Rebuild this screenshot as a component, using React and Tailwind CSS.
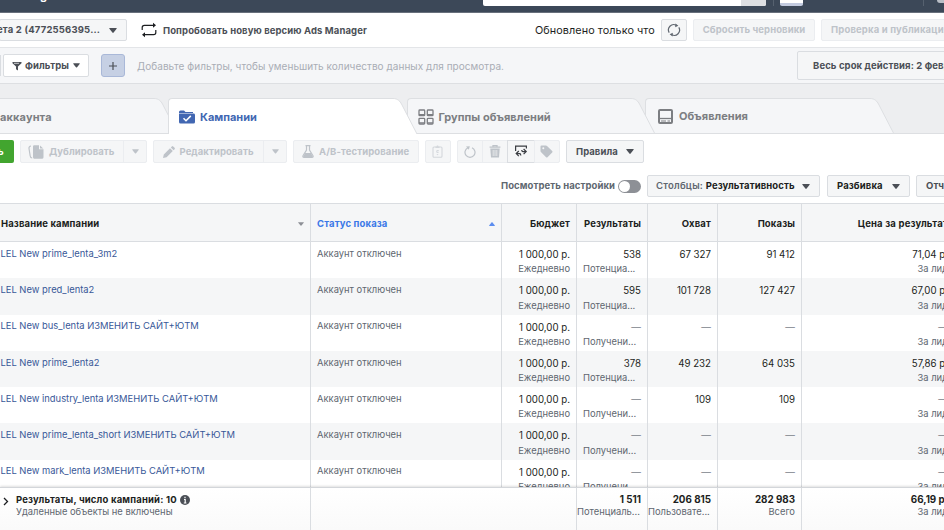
import React from "react";
import clsx from "clsx";

const Caret = ({ className = "text-[#4b4f56]" }) => (
  <svg viewBox="0 0 8 5" className={clsx("w-2 h-[5px] shrink-0", className)}>
    <path d="M.8 0h6.4q.9 0 .4.8L4.6 4.6q-.6.6-1.2 0L.4.8Q-.1 0 .8 0z" fill="currentColor" />
  </svg>
);

const box = "flex items-center shrink-0 border rounded-[2px] bg-[#f5f6f7] whitespace-nowrap";
const active = "border-[#dadde1] text-[#4b4f56]";
const disabled = "border-[#ebedf0] text-[#bec3c9]";

function TopBar() {
  return (
    <div className="h-[13px] bg-[#3c4858] border-b border-[#68707c] flex items-start overflow-hidden shrink-0 *:shrink-0">
      <div className="w-[483px] h-3 relative">
        <span className="absolute left-[-18px] top-[-13px] text-[12px] leading-[15px] font-semibold text-white whitespace-nowrap">
          Ads Manager
        </span>
      </div>
      <div className="w-[283px] h-1.5 rounded-b-[2px] bg-white flex justify-end overflow-hidden">
        <div className="w-[25px] bg-[#dddfe2]" />
      </div>
      <div className="ml-[7px] w-px h-1.5 bg-[#56616f]" />
      <div className="ml-1.5 w-[23px] h-1.5 rounded-b-[2px] bg-white border-b-[3px] border-[#c3cbe0]" />
      <div className="ml-[120px] w-px h-1.5 bg-[#56616f]" />
      <div className="ml-[13px] w-3 h-[3px] rounded-b-full bg-[#b9bec6]" />
    </div>
  );
}

function AccountBar() {
  return (
    <div className="h-[35px] bg-white border-b border-[#e3e5e8] flex items-center shrink-0 *:shrink-0">
      <div className={clsx(box, active, "w-[128px] h-[22px] -ml-px pr-[9px] justify-between text-[9.5px] font-bold")}>
        <span className="-ml-[3px] pt-px tracking-[0.18px]">ета 2 (4772556395...</span>
        <Caret />
      </div>
      <svg viewBox="0 0 16 16" className="ml-[14px] w-4 h-4" fill="none" stroke="#1c1e21" strokeWidth="1.2">
        <path d="M1.2 8V5.500q0-2.200 2.200-2.200H13M14.800 8v2.500q0 2.200-2.200 2.200H3" />
        <path d="M12 .8l3 2.500-3 2.500zM4 10.200l-3 2.500 3 2.500z" fill="#1c1e21" stroke="none" />
      </svg>
      <span className="ml-1.5 pt-0.5 w-[372px] text-[9.5px] font-bold tracking-[0.1px] text-[#4b4f56] whitespace-nowrap">
        Попробовать новую версию Ads Manager
      </span>
      <span className="pt-0.5 w-[126px] text-[10.8px] tracking-[0.08px] text-[#1c1e21] whitespace-nowrap">Обновлено только что</span>
      <div className={clsx(box, active, "w-[26px] h-[22px] justify-center")}>
        <svg viewBox="0 0 14 14" className="w-3.5 h-3.5" fill="none" stroke="#606770" strokeWidth="1.2">
          <path d="M2.200 9.600A5.300 5.300 0 0 1 9.200 2.200M11.800 4.400A5.300 5.300 0 0 1 4.800 11.800" />
          <path d="M8.400.4l3 2.300-3.200 1.500zM5.600 13.600l-3-2.300 3.200-1.500z" fill="#606770" stroke="none" />
        </svg>
      </div>
      <div className={clsx(box, disabled, "ml-1.5 pt-px w-[122px] h-[22px] justify-center text-[9.5px] font-bold tracking-[0.1px]")}>
        Сбросить черновики
      </div>
      <div className={clsx(box, disabled, "ml-1.5 pt-px w-[150px] h-[22px] pl-[9px] text-[9.5px] font-bold tracking-[0.16px]")}>
        Проверка и публикация
      </div>
    </div>
  );
}

function FilterBar() {
  return (
    <div className="h-[36px] bg-[#f5f6f8] border-b border-[#dddfe2] flex items-center shrink-0 *:shrink-0">
      <div className="w-px h-[21px] bg-[#dadde1]" />
      <div className="ml-0.5 w-[86px] h-[23px] flex items-center bg-white border border-[#dadde1] rounded-[2px] pl-2 text-[#4b4f56]">
        <svg viewBox="0 0 10 10" className="w-[10px] h-[10px]">
          <path d="M.5 1h9v1.200L6 5.600V9.500L4 8.200V5.600L.5 2.200z" fill="currentColor" />
          <path d="M2 2.300h5" stroke="#fff" strokeWidth=".7" />
        </svg>
        <span className="ml-[3px] pt-px w-[45px] text-[9.5px] font-bold tracking-[0.08px]">Фильтры</span>
        <Caret className="ml-[3px] !w-[7px] text-[#4b4f56]" />
      </div>
      <div className="ml-3 w-6 h-[23px] rounded-[3px] border border-[#a9b8d8] bg-[#c6d0e4] flex items-center justify-center">
        <svg viewBox="0 0 8 8" className="w-2 h-2">
          <path d="M4 0v8M0 4h8" stroke="#4b4f56" strokeWidth="1.200" />
        </svg>
      </div>
      <span className="ml-3 pt-px w-[660px] text-[10px] tracking-[0.04px] text-[#a9adb5] whitespace-nowrap">
        Добавьте фильтры, чтобы уменьшить количество данных для просмотра.
      </span>
      <div className={clsx(box, active, "w-[170px] h-[29px] pt-px pl-[15px] text-[9.5px] font-bold tracking-[0.1px]")}>
        Весь срок действия: 2 февр.
      </div>
    </div>
  );
}

function Tab({ children, selected, z, first }) {
  const fill = selected ? "#ffffff" : "#f5f6f8";
  return (
    <div className={clsx("relative flex h-[36px] shrink-0 -mr-[10px]", z, first ? "w-[178px]" : "w-[248.500px]")}>
      <div
        className={clsx(
          "flex-1 flex items-center border-t border-[#dddfe2] text-[11px] font-bold whitespace-nowrap",
          !first && "border-l rounded-tl-[4px] pl-[10px]",
          selected ? "bg-white text-[#4267b2]" : "bg-[#f5f6f8] border-b text-[#7c7e82]"
        )}
      >
        {children}
      </div>
      <svg viewBox="0 0 24 36" className="w-6 h-9 shrink-0">
        <path d="M0 .5C5 .5 7 3.500 8.500 6L24 36H0z" fill={fill} />
        <path d="M0 .5C5 .5 7 3.500 8.500 6L24 36" fill="none" stroke="#dddfe2" />
        {!selected && <path d="M0 35.500H24" stroke="#dddfe2" />}
      </svg>
    </div>
  );
}

function Tabs() {
  return (
    <div className="h-[50px] bg-[#edeef0] border-b border-[#dddfe2] flex items-start pt-[14px] shrink-0">
      <Tab first z="z-0">
        <span className="mt-0.5 tracking-[0.12px]">аккаунта</span>
      </Tab>
      <Tab selected z="z-30">
        <svg viewBox="0 0 16 14" className="w-4 h-3.5">
          <path d="M0 2Q0 .5 1.500.5H5L6.500 2H14V3H0z" fill="#4267b2" />
          <path d="M0 3.600H14.500Q16 3.600 16 5v7q0 1.500-1.500 1.500h-13Q0 13.500 0 12z" fill="#4267b2" />
          <path d="M4.500 8.200l2.500 2.500 4.800-4.800" fill="none" stroke="#fff" strokeWidth="1.500" />
        </svg>
        <span className="mt-px ml-[5px]">Кампании</span>
      </Tab>
      <Tab z="z-20">
        <svg viewBox="0 0 16 16" className="mt-px w-4 h-4" fill="none" stroke="#7c7e82" strokeWidth="1.300">
          <rect x="1" y="1" width="5.700" height="5.700" rx=".8" />
          <rect x="9.300" y="1" width="5.700" height="5.700" rx=".8" />
          <rect x="1" y="9.300" width="5.700" height="5.700" rx=".8" />
          <rect x="9.300" y="9.300" width="5.700" height="5.700" rx=".8" />
          <path d="M1 5.600h5.700M9.300 5.600H15M1 13.900h5.700M9.300 13.900H15" />
        </svg>
        <span className="mt-0.5 ml-[5px] tracking-[0.04px]">Группы объявлений</span>
      </Tab>
      <Tab z="z-10">
        <svg viewBox="0 0 15 15" className="mt-px ml-[2px] w-[15px] h-[15px]">
          <rect x="1" y="1" width="13" height="13" rx="1" fill="none" stroke="#7c7e82" strokeWidth="2" />
          <path d="M1 9.500h13" stroke="#7c7e82" strokeWidth="1.300" />
          <path d="M3 12h5M9.500 12h2.500" stroke="#7c7e82" strokeWidth="1" />
        </svg>
        <span className="mt-px ml-[6px] tracking-[0.04px]">Объявления</span>
      </Tab>
    </div>
  );
}

function SplitButton({ icon, label, width }) {
  return (
    <div className={clsx(box, disabled, "h-[23px] text-[9.5px] font-bold", width)}>
      <div className="flex-1 flex items-center pl-[7px]">
        {icon}
        <span className="ml-[5px] pt-px tracking-[0.06px]">{label}</span>
      </div>
      <div className="w-[23px] h-full border-l border-[#ebedf0] flex items-center justify-center">
        <Caret className="!w-[7px] text-[#bec3c9]" />
      </div>
    </div>
  );
}

function Toolbar() {
  return (
    <div className="h-[35px] flex items-center shrink-0 *:shrink-0">
      <div className="w-[14px] h-[23px] rounded-r-[2px] bg-[#42a52f] flex items-center text-white text-[9.5px] font-bold overflow-hidden">
        <span className="-ml-[2px] pt-px">ь</span>
      </div>
      <div className="ml-1.5 flex">
        <SplitButton
          width="w-[127px]"
          label="Дублировать"
          icon={
            <svg viewBox="0 0 16 14" className="w-4 h-3.5">
              <path d="M3 1Q.8 1.200 1 3.500l1.200 7.500q.3 2 2 2" fill="none" stroke="currentColor" strokeWidth="1.200" />
              <path d="M5 1.500Q5 .3 6.200.3H11v4h4.500v8q0 1.400-1.200 1.400H6.200Q5 13.700 5 12.300zM12 .5l3.300 2.900H12z" fill="currentColor" />
            </svg>
          }
        />
      </div>
      <div className="ml-1.5 flex">
        <SplitButton
          width="w-[134px]"
          label="Редактировать"
          icon={
            <svg viewBox="0 0 12 12" className="ml-[1.5px] w-3 h-3">
              <path d="M0 12l.8-3.600L7 2.200 9.800 5 3.600 11.200zM7.800 1.400L8.800.4q.7-.6 1.400 0l1.400 1.400q.6.7 0 1.400l-1 1z" fill="currentColor" />
            </svg>
          }
        />
      </div>
      <div className={clsx(box, disabled, "ml-1.5 w-[126px] h-[23px] pl-2 text-[9.5px] font-bold")}>
        <svg viewBox="0 0 12 13" className="w-3 h-[13px]">
          <path d="M3.500.7h5M4.500.7V5L1 10.800Q.4 12.300 2 12.300h8q1.600 0 1-1.500L7.500 5V.7" fill="none" stroke="currentColor" strokeWidth="1.200" />
          <path d="M3 8h6l2 4H1z" fill="currentColor" />
        </svg>
        <span className="ml-[5px] pt-px tracking-[0.1px]">A/B-тестирование</span>
      </div>
      <div className={clsx(box, disabled, "ml-1.5 w-[26px] h-[23px] justify-center")}>
        <svg viewBox="0 0 11 13" className="-ml-px w-[11px] h-[13px]" fill="none" stroke="#d4d7dc">
          <rect x="1" y="2" width="9" height="10.300" rx="1" strokeWidth="1.100" />
          <path d="M3.500 2.300h4M5.500.5v2" strokeWidth="1.400" />
          <path d="M6.800 5.600H4.800V7.400H6.600M4.800 9.600h1.400" strokeWidth="1" />
        </svg>
      </div>
      <div className="ml-1.5 flex">
        <div className={clsx(box, disabled, "w-[26px] h-[23px] justify-center rounded-r-none")}>
          <svg viewBox="0 0 12 13" className="-ml-px w-3 h-[13px]">
            <path d="M4 2.800A5 5 0 1 0 8 2.800" fill="none" stroke="currentColor" strokeWidth="1.200" />
            <path d="M2 1.500L5.800 1.200 4.900 4.800z" fill="currentColor" />
          </svg>
        </div>
        <div className={clsx(box, disabled, "w-[26px] h-[23px] -ml-px justify-center rounded-none")}>
          <svg viewBox="0 0 12 13" className="-ml-px w-3 h-[13px]">
            <path d="M.6 2.200h10.800M4 1.800V.6h4v1.200" stroke="currentColor" strokeWidth="1.300" fill="none" />
            <path d="M1.300 3.600h9.400L10 12.600H2z" fill="currentColor" />
            <path d="M4.200 5v6M6 5v6M7.800 5v6" stroke="#f5f6f7" strokeWidth=".7" />
          </svg>
        </div>
        <div className={clsx(box, active, "w-[28px] h-[23px] -ml-px justify-center rounded-none")}>
          <svg viewBox="0 0 14 13" className="w-3.5 h-[13px]" fill="none" stroke="#3a3d42" strokeWidth="1.200">
            <path d="M1.600 6V1.100H12.400V3.400" />
            <path d="M4.800 6L2.200 8.600l2.600 2.600M2.400 8.600H5.600Q6.800 8.600 6.800 10.400M9.600 4l2.600 2.600-2.600 2.600M12 6.600H9Q7.800 6.600 7.800 5" />
          </svg>
        </div>
        <div className={clsx(box, disabled, "w-[26px] h-[23px] -ml-px justify-center rounded-l-none")}>
          <svg viewBox="0 0 13 13" className="-ml-px w-[13px] h-[13px]">
            <path d="M.5 1.500q0-1 1-1H6q.6 0 1 .4l5.200 5.200q.7.7 0 1.400l-4.700 4.700q-.7.700-1.400 0L.9 7Q.5 6.600.5 6z" fill="currentColor" />
            <circle cx="3.300" cy="3.300" r="1" fill="#f5f6f7" />
          </svg>
        </div>
      </div>
      <div className={clsx(box, active, "ml-1.5 w-[78px] h-[23px] px-[9px] justify-between text-[9.5px] font-bold")}>
        <span className="pt-px tracking-[0.06px]">Правила</span>
        <Caret />
      </div>
    </div>
  );
}

function ViewBar() {
  return (
    <div className="h-[34px] flex items-center shrink-0 *:shrink-0 text-[9.5px] font-bold whitespace-nowrap">
      <span className="ml-[501px] pt-px w-[117px] tracking-[0.08px] text-[#606770]">Посмотреть настройки</span>
      <div className="w-[23px] h-[13px] rounded-full bg-[#8d9096] p-px flex items-center">
        <div className="w-[11px] h-[11px] rounded-full bg-white" />
      </div>
      <div className={clsx(box, active, "ml-1.5 w-[173px] h-[22px] pl-2 pr-[9px] justify-between")}>
        <span className="pt-px tracking-[0.1px]">
          <span className="font-semibold tracking-[0.24px] text-[#606770]">Столбцы: </span>
          <span className="text-[#1c1e21]">Результативность</span>
        </span>
        <Caret />
      </div>
      <div className={clsx(box, active, "ml-[7px] w-[83px] h-[22px] px-[9px] justify-between")}>
        <span className="pt-px tracking-[0.12px] text-[#1c1e21]">Разбивка</span>
        <Caret />
      </div>
      <div className={clsx(box, active, "ml-1.5 w-[70px] h-[22px] pl-[9px]")}>
        <span className="pt-px tracking-[0.12px]">Отчеты</span>
      </div>
    </div>
  );
}

const grid = "grid grid-cols-[311px_191px_75px_71px_70px_84px_149px] w-[951px]";
const cell = "border-r border-[#dadde1] min-w-0 overflow-hidden whitespace-nowrap";

const rows = [
  ["LEL New prime_lenta_3m2", "538", "Потенциа...", "67 327", "91 412", "71,04 р."],
  ["LEL New pred_lenta2", "595", "Потенциа...", "101 728", "127 427", "67,00 р."],
  ["LEL New bus_lenta ИЗМЕНИТЬ САЙТ+ЮТМ", "—", "Получени...", "—", "—", "—"],
  ["LEL New prime_lenta2", "378", "Потенциа...", "49 232", "64 035", "57,86 р."],
  ["LEL New industry_lenta ИЗМЕНИТЬ САЙТ+ЮТМ", "—", "Получени...", "109", "109", "—"],
  ["LEL New prime_lenta_short ИЗМЕНИТЬ САЙТ+ЮТМ", "—", "Получени...", "—", "—", "—"],
  ["LEL New mark_lenta ИЗМЕНИТЬ САЙТ+ЮТМ", "—", "Получени...", "—", "—", "—"],
];

const valueTone = (value) => (value === "—" ? "text-[#7b8088]" : "text-[#1c1e21]");

function Metric({ value, note, noteClass = "" }) {
  return (
    <div className={clsx(cell, "pr-1.5 pt-[6.2px] text-right leading-[14.3px]")}>
      <div className={clsx("text-[9.7px]", valueTone(value))}>{value}</div>
      {note && <div className={clsx("text-[9.4px] text-[#606770]", noteClass)}>{note}</div>}
    </div>
  );
}

function Table() {
  return (
    <div className="flex-1 min-h-0 overflow-hidden">
      <div className={clsx(grid, "h-[39px] bg-[#f5f6f7] border-t border-b border-[#dadde1] text-[9.5px] font-bold tracking-[0.13px] text-[#1c1e21] *:pt-[3px]")}>
        <div className={clsx(cell, "flex items-center justify-between pl-px pr-[6px]")}>
          <span>Название кампании</span>
          <Caret className="!w-1.5 !h-1 text-[#8d9096]" />
        </div>
        <div className={clsx(cell, "flex items-center justify-between pl-1.5 pr-1.5 text-[#3b78e7]")}>
          <span>Статус показа</span>
          <Caret className="!w-1.5 !h-1 rotate-180 text-[#5b8def]" />
        </div>
        {["Бюджет", "Результаты", "Охват", "Показы"].map((t) => (
          <div key={t} className={clsx(cell, "flex items-center justify-end pr-1.5")}>
            {t}
          </div>
        ))}
        <div className="flex items-center justify-end pr-[3px] tracking-[0.18px] whitespace-nowrap">Цена за результат</div>
      </div>
      {rows.map(([name, res, note, reach, views, cost], i) => (
        <div key={name} className={clsx(grid, "h-[36.250px] text-[9.4px]", i % 2 ? "bg-[#f5f6f7]" : "bg-white")}>
          <div className={clsx(cell, "pl-[0.5px] pt-[3.8px] leading-[15px] text-[#385898]")}>{name}</div>
          <div className={clsx(cell, "pl-1.5 pt-[3.8px] leading-[15px] text-[#606770]")}>Аккаунт отключен</div>
          <Metric value="1 000,00 р." note="Ежедневно" />
          <Metric value={res} note={note} noteClass="text-left pl-1.5" />
          <Metric value={reach} />
          <Metric value={views} />
          <div className="pr-[3px] pt-[6.2px] text-right leading-[14.3px] whitespace-nowrap">
            <div className={clsx("text-[9.7px]", valueTone(cost))}>{cost}</div>
            <div className="text-[#606770]">За лид</div>
          </div>
        </div>
      ))}
    </div>
  );
}

function Total({ value, note, noteClass = "" }) {
  return (
    <div className={clsx(cell, "pr-1.5 text-right")}>
      <div className="text-[9.8px] font-bold text-[#1c1e21]">{value}</div>
      <div className={clsx("text-[#606770]", noteClass)}>{note}</div>
    </div>
  );
}

function Footer() {
  return (
    <div className={clsx(grid, "relative h-[43px] shrink-0 border-t border-[#d3d6da] shadow-[0_-1px_2px_rgba(0,0,0,0.12)] bg-linear-to-b from-white to-[#fafafa] text-[9.4px] leading-[12.5px] *:pt-[5.6px]")}>
      <div className={clsx(cell, "flex items-start")}>
        <svg viewBox="0 0 6 9" className="ml-[3px] mt-[3px] w-1.5 h-[9px]">
          <path d="M1 1l3.500 3.500L1 8" fill="none" stroke="#1c1e21" strokeWidth="1.300" />
        </svg>
        <div className="ml-[7px]">
          <div className="flex items-center text-[9.5px] font-bold text-[#1c1e21]">
            <span className="tracking-[0.17px]">Результаты, число кампаний: 10</span>
            <svg viewBox="0 0 10 10" className="ml-[3px] w-2.5 h-2.5">
              <circle cx="5" cy="5" r="5" fill="#4b4f56" />
              <path d="M5 1.700v1.500M4 4.500h1.200V8M3.800 8h2.600" stroke="#fff" strokeWidth="1.200" fill="none" />
            </svg>
          </div>
          <div className="text-[#606770]">Удаленные объекты не включены</div>
        </div>
      </div>
      <div className="col-span-2 border-r border-[#dadde1] flex">
        <div className="w-0" />
      </div>
      <Total value="1 511" note="Потенциаль..." noteClass="text-left" />
      <Total value="206 815" note="Пользовате..." noteClass="text-left" />
      <Total value="282 983" note="Всего" />
      <div className="pr-[3px] text-right">
        <div className="text-[9.8px] font-bold text-[#1c1e21]">66,19 р.</div>
        <div className="text-[#606770]">За лид</div>
      </div>
    </div>
  );
}

export default function App() {
  return (
    <div className="w-[944px] h-[530px] overflow-hidden flex flex-col bg-white font-['Inter','Roboto',sans-serif]">
      <TopBar />
      <AccountBar />
      <FilterBar />
      <Tabs />
      <Toolbar />
      <ViewBar />
      <Table />
      <Footer />
    </div>
  );
}
